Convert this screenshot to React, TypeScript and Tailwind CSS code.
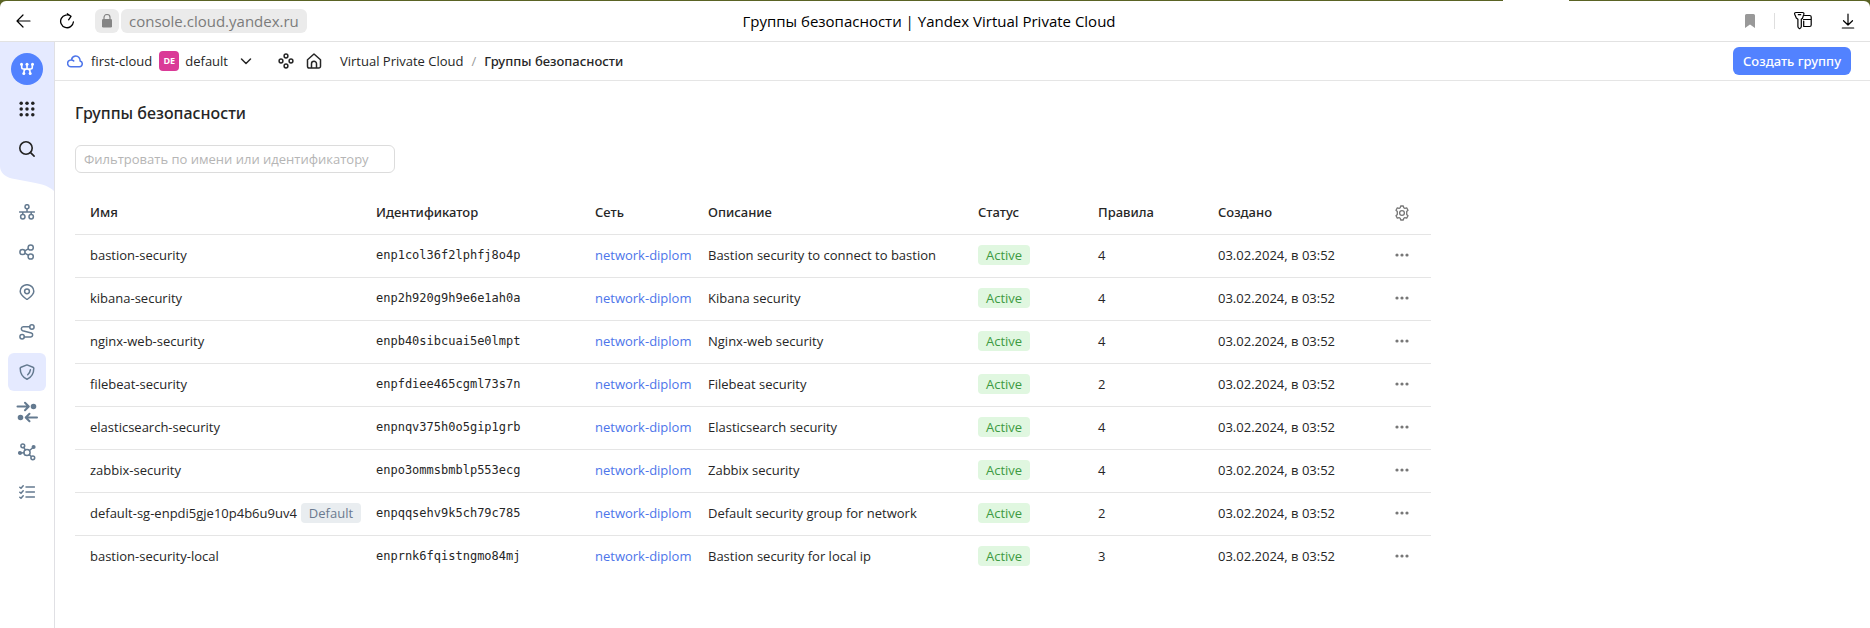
import type { ReactNode } from 'react';

type Group = {
  name: string;
  isDefault?: boolean;
  id: string;
  description: string;
  rules: number;
};

const groups: Group[] = [
  { name: 'bastion-security', id: 'enp1col36f2lphfj8o4p', description: 'Bastion security to connect to bastion', rules: 4 },
  { name: 'kibana-security', id: 'enp2h920g9h9e6e1ah0a', description: 'Kibana security', rules: 4 },
  { name: 'nginx-web-security', id: 'enpb40sibcuai5e0lmpt', description: 'Nginx-web security', rules: 4 },
  { name: 'filebeat-security', id: 'enpfdiee465cgml73s7n', description: 'Filebeat security', rules: 2 },
  { name: 'elasticsearch-security', id: 'enpnqv375h0o5gip1grb', description: 'Elasticsearch security', rules: 4 },
  { name: 'zabbix-security', id: 'enpo3ommsbmblp553ecg', description: 'Zabbix security', rules: 4 },
  { name: 'default-sg-enpdi5gje10p4b6u9uv4', isDefault: true, id: 'enpqqsehv9k5ch79c785', description: 'Default security group for network', rules: 2 },
  { name: 'bastion-security-local', id: 'enprnk6fqistngmo84mj', description: 'Bastion security for local ip', rules: 3 },
];

function Icon({ children, size = 16, sw = 1.5 }: { children: ReactNode; size?: number; sw?: number }) {
  return (
    <svg
      width={size}
      height={size}
      viewBox={`0 0 ${size} ${size}`}
      fill="none"
      stroke="currentColor"
      strokeWidth={sw}
      strokeLinecap="round"
      strokeLinejoin="round"
      aria-hidden="true"
      className="shrink-0"
    >
      {children}
    </svg>
  );
}

const navItems: { label: string; active?: boolean; icon: ReactNode }[] = [
  {
    label: 'Облачные сети',
    icon: (
      <Icon>
        <circle cx="8" cy="2.7" r="2" />
        <path d="M8 4.7V8M.5 8h15M3.8 8v2.3M12.2 8v2.3" />
        <circle cx="3.8" cy="12.7" r="2.2" />
        <circle cx="12.2" cy="12.7" r="2.2" />
      </Icon>
    ),
  },
  {
    label: 'Подсети',
    icon: (
      <Icon>
        <circle cx="3.5" cy="8" r="2.6" />
        <circle cx="11.7" cy="3.5" r="2.6" />
        <circle cx="11.7" cy="12.5" r="2.6" />
        <path d="M5.8 6.8l3.5-2M5.8 9.2l3.5 2" />
      </Icon>
    ),
  },
  {
    label: 'IP-адреса',
    icon: (
      <Icon>
        <path d="M8 15.6C5.6 13.7 1.2 11 1.2 7.2a6.8 6.5 0 0 1 13.6 0c0 3.8-4.4 6.5-6.8 8.4z" />
        <circle cx="8" cy="7.3" r="2.4" />
      </Icon>
    ),
  },
  {
    label: 'Таблицы маршрутизации',
    icon: (
      <Icon>
        <circle cx="12.9" cy="3" r="2.2" />
        <circle cx="3.1" cy="12.7" r="2.2" />
        <path d="M10.7 2.8H4.2a2 2 0 0 0-.5 3.9l8.6 2.3a2 2 0 0 1-.5 3.9H5.3" />
      </Icon>
    ),
  },
  {
    label: 'Группы безопасности',
    active: true,
    icon: (
      <Icon>
        <path d="M8 .9L14 3.2c.5.2.8.6.8 1.1C14.8 9.5 12 13.5 8 15.2 4 13.5 1.2 9.5 1.2 4.3c0-.5.3-.9.8-1.1z" />
        <path d="M11.4 5.8c-.3 2-1.2 3.7-2.7 5" />
      </Icon>
    ),
  },
  {
    label: 'Шлюзы',
    icon: (
      <Icon size={22} sw={2}>
        <path d="M1.5 5.5h11M9 1.7l3.8 3.8L9 9.3M21 16.5H10M13.5 12.7l-3.8 3.8 3.8 3.8" />
        <circle cx="17.5" cy="5.5" r="1.8" fill="currentColor" />
        <circle cx="4.5" cy="16.5" r="1.8" fill="currentColor" />
      </Icon>
    ),
  },
  {
    label: 'Сетевые подключения',
    icon: (
      <Icon size={18}>
        <circle cx="9" cy="9.5" r="3.1" />
        <circle cx="4.8" cy="2.8" r="1.9" />
        <circle cx="14.8" cy="14.8" r="1.9" />
        <circle cx="15.6" cy="4" r="1.3" fill="currentColor" />
        <circle cx="2" cy="10" r="1.3" fill="currentColor" />
        <path d="M5.8 4.5l1.5 2.4M11.3 11.8l2 1.7M11.5 7.5l3.3-2.8M3 10l3-.2" />
      </Icon>
    ),
  },
  {
    label: 'Операции',
    icon: (
      <Icon>
        <path d="M7 3h8.500M7 8h8.500M7 13h8.500M.8 3.2l1.200 1.100 2.200-2.600M.8 8.200L2 9.300l2.200-2.600M.8 13.200L2 14.300l2.200-2.600" />
      </Icon>
    ),
  },
];

function BrowserBar() {
  return (
    <div className="bg-[#5a6324]">
      <div className="flex h-px justify-end pr-[301px]">
        <div className="w-[66px] bg-white" />
      </div>
      <div className="relative flex h-[41px] items-center justify-between rounded-t-md border-b border-[#e2e2e2] bg-white pr-3.5 pl-4">
        <div className="flex items-center">
          <button type="button" aria-label="Назад" className="text-black">
            <Icon sw={1.2}>
              <path d="M14 8H1M7 2L1 8l6 6" />
            </Icon>
          </button>
          <button type="button" aria-label="Обновить" className="ml-[27px] text-black">
            <Icon sw={1.3}>
              <path d="M12 3.300A6.400 6.400 0 1 0 14.400 9M8.300 .8l3.700 2.500-2.400 3.500" />
            </Icon>
          </button>
          <button type="button" aria-label="Сведения о сайте" className="ml-5 flex h-6 w-6 items-center justify-center rounded-md bg-[#ebebeb]">
            <svg width="10" height="14" viewBox="0 0 10 14" aria-hidden="true">
              <rect y="5" width="10" height="8.500" rx="1.300" fill="#858585" />
              <path d="M2 5.500V3.500a3 3 0 0 1 6 0v2" fill="none" stroke="#858585" strokeWidth="1.200" />
            </svg>
          </button>
          <div className="ml-0.5 flex h-6 items-center rounded-md bg-[#ebebeb] px-2 text-[15px] text-[#7b7b7b]">console.cloud.yandex.ru</div>
        </div>
        <div className="pointer-events-none absolute inset-x-0 pr-3 text-center text-[15px] text-black">
          Группы безопасности | Yandex Virtual Private Cloud
        </div>
        <div className="flex items-center">
          <button type="button" aria-label="Закладка">
            <svg width="10" height="14" viewBox="0 0 10 14" aria-hidden="true">
              <path d="M0 1.500Q0 0 1.500 0h7Q10 0 10 1.500V14L5 10.500 0 14z" fill="#999" />
            </svg>
          </button>
          <div className="ml-[19px] h-4 w-px bg-[#dedede]" />
          <button type="button" aria-label="Пароли" className="ml-[18px] text-black">
            <Icon size={20} sw={1.2}>
              <path d="M3 1.500h6.500c1.300 0 1.600.8 1.300 1.900L9.500 7.200 8.300 8.200V15.500c0 1-.7 1.700-1.700 2.200-1-.5-1.700-1.200-1.700-2.200V8.200L3.300 7 1.700 3.300C1.300 2.200 1.700 1.500 3 1.500zM5.300 3.700h2.400" />
              <path d="M11.500 4.500h5.200c.9 0 1.500.6 1.500 1.500v8c0 .9-.6 1.500-1.500 1.500h-6V10M10.500 8.500h7.500" />
            </Icon>
          </button>
          <button type="button" aria-label="Загрузки" className="ml-[27px] text-black">
            <Icon sw={1.2}>
              <path d="M8 1v11M3.500 7.700L8 12l4.500-4.300M2.300 15h11.400" />
            </Icon>
          </button>
        </div>
      </div>
    </div>
  );
}

function Sidebar() {
  return (
    <aside className="relative w-[55px] shrink-0 border-r border-[#e0e0e4] bg-white">
      <svg className="absolute top-0 left-0" width="54" height="149" viewBox="0 0 54 149" aria-hidden="true">
        <path d="M0 0H54V149C50 145 43 142 33 140.500L12 136.500C4 134.500 0 130 0 124z" fill="#e5eaff" />
      </svg>
      <nav aria-label="Сервисы" className="relative flex flex-col items-center pt-[7px]">
        <a href="#home" aria-label="Облако" className="flex h-10 items-center">
          <svg width="32" height="32" viewBox="0 0 32 32" aria-hidden="true">
            <circle cx="16" cy="16" r="16" fill="#5282ff" />
            <path
              d="M10.700 11.500v2.800q0 1.700 1.700 1.700h7.200q1.700 0 1.700-1.700v-2.800M16 11.500V16M13 20.500v-2q0-2.500 3-2.500t3 2.500v2"
              fill="none"
              stroke="#fff"
              strokeWidth="1.600"
              strokeLinejoin="round"
            />
            <g fill="#fff">
              <circle cx="10.500" cy="11.300" r="1.500" />
              <circle cx="16" cy="11.300" r="1.500" />
              <circle cx="21.500" cy="11.300" r="1.500" />
              <circle cx="12.800" cy="20.600" r="1.500" />
              <circle cx="19.200" cy="20.600" r="1.500" />
            </g>
          </svg>
        </a>
        <button type="button" aria-label="Все сервисы" className="flex h-10 w-10 items-center justify-center">
          <svg width="16" height="16" viewBox="0 0 16 16" fill="#222" aria-hidden="true">
            {[2.2, 8, 13.8].map((y) => [2.2, 8, 13.8].map((x) => <circle key={`${x}-${y}`} cx={x} cy={y} r="1.750" />))}
          </svg>
        </button>
        <button type="button" aria-label="Поиск" className="flex h-10 w-10 items-center justify-center text-[#222]">
          <Icon sw={1.6}>
            <circle cx="7" cy="7" r="6.200" />
            <path d="M11.600 11.600l3.500 3.500" />
          </Icon>
        </button>
      </nav>
      <nav aria-label="Virtual Private Cloud" className="relative flex flex-col items-center gap-0.5 pt-6">
        {navItems.map((item) => (
          <a
            key={item.label}
            href="#nav"
            aria-label={item.label}
            className={
              item.active
                ? 'flex h-[38px] w-[38px] items-center justify-center rounded-md bg-[#e5eaff] text-[#647a90]'
                : 'flex h-[38px] w-[38px] items-center justify-center rounded-md text-[#647a90]'
            }
          >
            {item.icon}
          </a>
        ))}
      </nav>
    </aside>
  );
}

function Header() {
  return (
    <header className="flex h-[39px] items-center justify-between border-b border-[#e5e5e5] pr-[19px] pl-3">
      <div className="flex items-center">
        <a href="#cloud" className="flex items-center gap-2">
          <span className="text-[#4d75ea]">
            <Icon>
              <path d="M4.200 13.700h8.300a2.900 2.900 0 0 0 .6-5.700c.2-2.900-1.800-5-4.300-5-2.200 0-3.600 1.200-4.200 3.200M4.200 13.700a3.400 3.400 0 0 1-.4-6.800c1.100-.1 2.200.3 2.900 1" />
            </Icon>
          </span>
          first-cloud
        </a>
        <a href="#folder" className="ml-[7px] flex items-center gap-1.5">
          <span className="flex h-5 w-5 items-center justify-center rounded bg-[#da3a97] text-[9px] font-bold text-white">DE</span>
          default
        </a>
        <button type="button" aria-label="Выбрать каталог" className="ml-2.5">
          <Icon>
            <path d="M3.500 6L8 10.500 12.500 6" />
          </Icon>
        </button>
        <button type="button" aria-label="Сервисы каталога" className="ml-6">
          <Icon>
            <circle cx="8" cy="3" r="1.900" />
            <circle cx="3" cy="8" r="1.900" />
            <circle cx="13" cy="8" r="1.900" />
            <circle cx="8" cy="13" r="1.900" />
          </Icon>
        </button>
        <a href="#service" aria-label="Главная" className="ml-3">
          <Icon>
            <path d="M1.500 6.800L8 1l6.500 5.800v6.400a1.800 1.800 0 0 1-1.800 1.800H3.300a1.800 1.800 0 0 1-1.800-1.800zM5.500 15v-4.300a2.500 2.500 0 0 1 5 0V15" />
          </Icon>
        </a>
        <nav aria-label="Навигация" className="ml-[18px] flex items-center gap-2">
          <a href="#vpc">Virtual Private Cloud</a>
          <span className="text-[#999]">/</span>
          <span className="font-['Noto_Sans',sans-serif] font-medium">Группы безопасности</span>
        </nav>
      </div>
      <button type="button" className="h-7 rounded-md bg-[#5282ff] px-2.5 font-['Noto_Sans',sans-serif] font-medium text-white">
        Создать группу
      </button>
    </header>
  );
}

function GroupsTable() {
  return (
    <table className="mt-[18px] w-full max-w-[1356px] table-fixed border-collapse text-left">
      <colgroup>
        <col className="w-[286px]" />
        <col className="w-[219px]" />
        <col className="w-[113px]" />
        <col className="w-[270px]" />
        <col className="w-[120px]" />
        <col className="w-[120px]" />
        <col className="w-[168px]" />
        <col className="w-[60px]" />
      </colgroup>
      <thead>
        <tr className="h-[43px] border-b border-[#e5e5e5]">
          {['Имя', 'Идентификатор', 'Сеть', 'Описание', 'Статус', 'Правила', 'Создано'].map((title) => (
            <th key={title} scope="col" className="pl-[15px] font-['Noto_Sans',sans-serif] font-medium">
              {title}
            </th>
          ))}
          <th scope="col" className="pt-0.5 pl-0.5">
            <button type="button" aria-label="Настройки таблицы" className="mx-auto block text-[#777]">
              <Icon sw={1.3}>
                <path d="M6.700 1h2.600l.5 1.800 1.100.6 1.800-.5L14 5.200 12.700 6.500v3L14 10.800l-1.300 2.300-1.800-.5-1.100.6L9.300 15H6.700l-.5-1.800-1.100-.6-1.800.5L2 10.800l1.300-1.300v-3L2 5.200l1.300-2.300 1.800.5 1.100-.6z" />
                <circle cx="8" cy="8" r="2.400" />
              </Icon>
            </button>
          </th>
        </tr>
      </thead>
      <tbody>
        {groups.map((group) => (
          <tr key={group.id} className="h-[43px] border-b border-[#e5e5e5] last:border-b-0">
            <td className="pb-0.5 pl-[15px] whitespace-nowrap">
              {group.name}
              {group.isDefault && <span className="ml-1 inline-block rounded bg-[#e9edf0] px-2 leading-5 text-[#6b7a8f]">Default</span>}
            </td>
            <td className="pb-0.5 pl-[15px] font-['DejaVu_Sans_Mono',monospace] text-xs">{group.id}</td>
            <td className="pb-0.5 pl-[15px] whitespace-nowrap">
              <a href="#network" className="text-[#4d75ea]">
                network-diplom
              </a>
            </td>
            <td className="pb-0.5 pl-[15px]">{group.description}</td>
            <td className="pb-0.5 pl-[15px]">
              <span className="inline-block rounded bg-[#e0f7e0] px-2 leading-5 text-[#3e9a42]">Active</span>
            </td>
            <td className="pb-0.5 pl-[15px]">{group.rules}</td>
            <td className="pb-0.5 pl-[15px]">03.02.2024, в 03:52</td>
            <td className="pb-0.5 pl-0.5">
              <button type="button" aria-label={`Действия: ${group.name}`} className="mx-auto block text-[#777]">
                <svg width="16" height="16" viewBox="0 0 16 16" fill="currentColor" aria-hidden="true" className="block">
                  <circle cx="3" cy="8" r="1.600" />
                  <circle cx="8" cy="8" r="1.600" />
                  <circle cx="13" cy="8" r="1.600" />
                </svg>
              </button>
            </td>
          </tr>
        ))}
      </tbody>
    </table>
  );
}

export default function App() {
  return (
    <div className="flex min-h-screen flex-col bg-white font-['Open_Sans','Noto_Sans',sans-serif] text-[13px] leading-[18px] text-[#262626]">
      <BrowserBar />
      <div className="flex flex-1">
        <Sidebar />
        <div className="min-w-0 flex-1">
          <Header />
          <main className="px-5 pt-5">
            <h1 className="font-['Noto_Sans',sans-serif] text-base leading-6 font-medium">Группы безопасности</h1>
            <input
              type="text"
              aria-label="Фильтр"
              placeholder="Фильтровать по имени или идентификатору"
              className="mt-5 block h-7 w-80 rounded-md border border-[#dcdcdc] px-2 outline-none placeholder:text-[#b5b5b5]"
            />
            <GroupsTable />
          </main>
        </div>
      </div>
    </div>
  );
}
